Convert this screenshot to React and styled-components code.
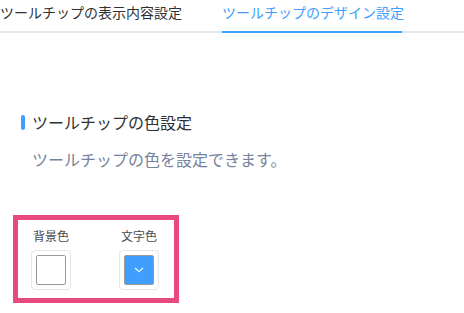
import styled, { createGlobalStyle } from "styled-components";

const GlobalStyle = createGlobalStyle`
    body {
        margin: 0;
        background: #ffffff;
        font-family: "Noto Sans CJK JP", "Noto Sans", sans-serif;
    }
`;

export default function App() {
    return (
        <Page>
            <GlobalStyle />
            <TabNav>
                <TabItem>ツールチップの表示内容設定</TabItem>
                <TabItem active>ツールチップのデザイン設定</TabItem>
            </TabNav>

            <Title>ツールチップの色設定</Title>
            <Description>ツールチップの色を設定できます。</Description>

            <Highlight>
                <PickerItem>
                    <Label>背景色</Label>
                    <Picker>
                        <Swatch color="#ffffff" />
                    </Picker>
                </PickerItem>
                <PickerItem>
                    <Label>文字色</Label>
                    <Picker>
                        <Swatch color="#409EFF">
                            <svg width="10" height="6" viewBox="0 0 10 6">
                                <polyline points="1,1 5,4.6 9,1" fill="none" stroke="#ffffff" strokeWidth="1.1" />
                            </svg>
                        </Swatch>
                    </Picker>
                </PickerItem>
            </Highlight>
        </Page>
    );
}

const Page = styled.div`
    width: 464px;
    height: 313px;
    overflow: hidden;
    display: flex;
    flex-direction: column;
    align-items: flex-start;
`;

const TabNav = styled.div`
    align-self: stretch;
    display: flex;
    border-bottom: 2px solid #E4E7ED;
`;

const TabItem = styled.div`
    position: relative;
    height: 31px;
    line-height: 24px;
    padding: 0 20px;
    font-size: 14px;
    color: ${(p) => (p.active ? "#409EFF" : "#303133")};

    &:first-child { padding-left: 0; }
    &:last-child { padding-right: 0; }

    &::after {
        content: "";
        display: ${(p) => (p.active ? "block" : "none")};
        position: absolute;
        left: 20px;
        right: 2px;
        bottom: -2px;
        height: 2px;
        background: #409EFF;
    }
`;

const Title = styled.div`
    display: flex;
    align-items: center;
    gap: 7px;
    margin: 80px 0 0 21px;
    height: 18px;
    line-height: 18px;
    font-size: 16px;
    color: #303133;

    &::before {
        content: "";
        width: 4px;
        height: 15px;
        border-radius: 2px;
        background: #409EFF;
    }
`;

const Description = styled.p`
    margin: 17px 0 0 32px;
    font-size: 16px;
    line-height: 22px;
    color: #76839B;
`;

const Highlight = styled.div`
    display: flex;
    gap: 48px;
    margin: 45px 0 0 13px;
    padding: 8px 15px 8px 13px;
    border: 5px solid #E94A7E;
`;

const PickerItem = styled.div`
    display: flex;
    flex-direction: column;
    align-items: center;
    width: 40px;
`;

const Label = styled.span`
    font-size: 12px;
    line-height: 16px;
    color: #4a4c52;
    white-space: nowrap;
    margin-bottom: 6px;
`;

const Picker = styled.div`
    box-sizing: border-box;
    width: 40px;
    height: 40px;
    padding: 4px;
    border: 1px solid #e6e6e6;
    border-radius: 4px;
`;

const Swatch = styled.div`
    box-sizing: border-box;
    width: 30px;
    height: 30px;
    border: 1px solid #999999;
    border-radius: 2px;
    background: ${(p) => p.color};
    display: flex;
    align-items: center;
    justify-content: center;
`;
